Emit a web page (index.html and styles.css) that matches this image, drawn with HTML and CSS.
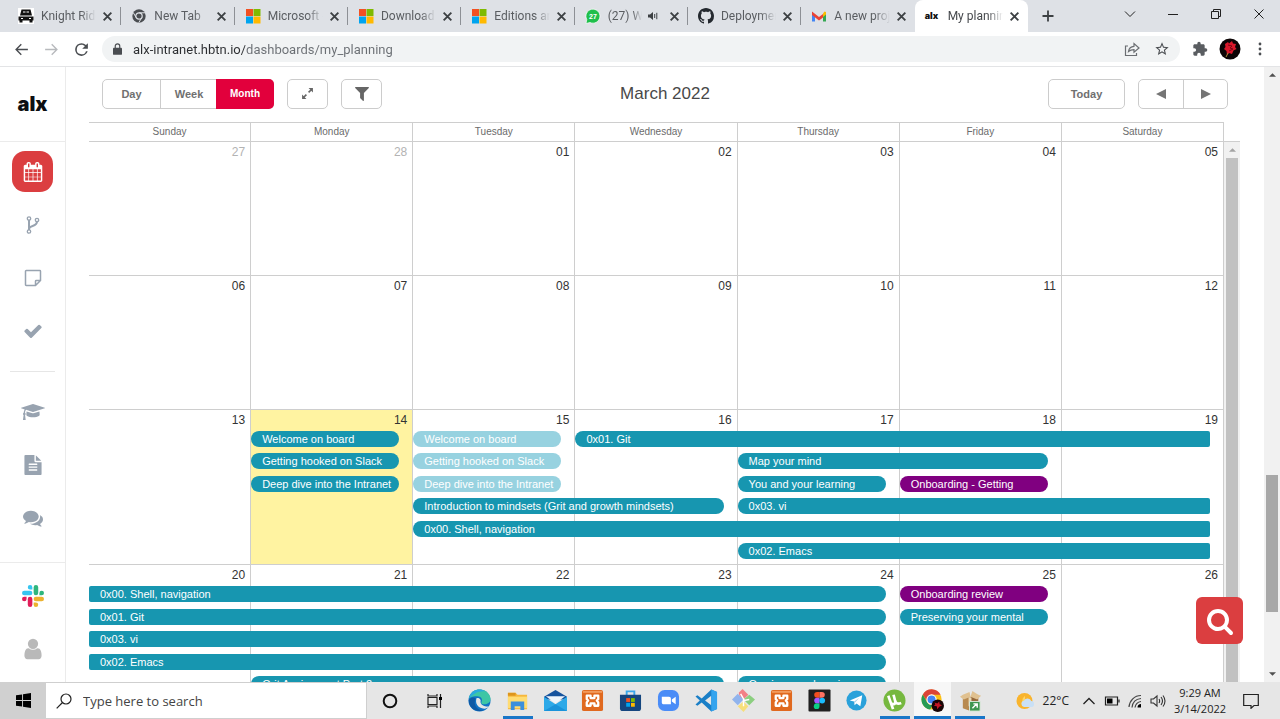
FILE: index.html
```html
<!DOCTYPE html>
<html lang="en">
<head>
<meta charset="utf-8">
<title>My planning</title>
<link rel="stylesheet" href="styles.css">
</head>
<body>
<svg class="defs" aria-hidden="true">
  <symbol id="close" viewBox="0 0 10 10"><path d="M1.500 1.500l7 7m0-7l-7 7" stroke="#3c4043" stroke-width="1.700" fill="none"/></symbol>
  <symbol id="ms" viewBox="0 0 16 16"><path fill="#f25022" d="M1 1h7v7H1z"/><path fill="#7fba00" d="M8.500 1h7v7h-7z"/><path fill="#00a4ef" d="M1 8.500h7v7H1z"/><path fill="#ffb900" d="M8.500 8.500h7v7h-7z"/></symbol>
  <symbol id="xampp" viewBox="0 0 24 24"><rect x="1" y="1" width="22" height="22" rx="2" fill="#e0691f"/><path d="M2 2h20v2H2z" fill="#f29a5c"/><path d="M6 7h4v2.500h4V7h4v3.500L16.500 12l1.500 2v3.500h-4V15h-4v2.500H6V14l1.500-2L6 10.500z" fill="none" stroke="#fff" stroke-width="2.400" stroke-linejoin="round"/></symbol>
</svg>

<header class="browser">
  <div class="tabstrip">
    <div class="tabs">
      <div class="tab"><svg class="fav" viewBox="0 0 16 16"><path fill="#fff" d="M0 0h16v16H0z"/><path d="M3.500 1.500h9l1.500 6H2zM.5 8.500h15v4H.5zM1.500 12h3v2.500h-3zM11.500 12h3v2.500h-3z" fill="#111"/><path d="M5 4h2.500M8.500 4H11M3 10.500h2M11 10.500h2" stroke="#fff"/></svg><span class="tab-title">Knight Rider</span><button class="tab-close" aria-label="Close tab"><svg><use href="#close"/></svg></button></div>
      <div class="tab"><svg class="fav" viewBox="0 0 16 16"><circle cx="8" cy="8" r="6.700" fill="#4a4d51"/><circle cx="8" cy="8" r="3.200" fill="#4a4d51" stroke="#dee1e6" stroke-width="1.200"/><path d="M8 4.800h6M5.200 9.600L2.200 4.500M10.800 9.600l-3 5" stroke="#dee1e6"/></svg><span class="tab-title">New Tab</span><button class="tab-close" aria-label="Close tab"><svg><use href="#close"/></svg></button></div>
      <div class="tab"><svg class="fav"><use href="#ms"/></svg><span class="tab-title">Microsoft - Official</span><button class="tab-close" aria-label="Close tab"><svg><use href="#close"/></svg></button></div>
      <div class="tab"><svg class="fav"><use href="#ms"/></svg><span class="tab-title">Download Windows</span><button class="tab-close" aria-label="Close tab"><svg><use href="#close"/></svg></button></div>
      <div class="tab"><svg class="fav"><use href="#ms"/></svg><span class="tab-title">Editions and</span><button class="tab-close" aria-label="Close tab"><svg><use href="#close"/></svg></button></div>
      <div class="tab"><svg class="fav" viewBox="0 0 16 16"><path d="M1 15.500l.8-4A7 7 0 1 1 5 14.500z" fill="#1fbf4b" stroke="#fff" stroke-width=".7"/><text x="8" y="10.700" text-anchor="middle" class="badge-text">27</text></svg><span class="tab-title">(27) WhatsApp</span><svg class="audio" viewBox="0 0 10 10"><path d="M0 3.500h2L5 1v8L2 6.500H0z" fill="#3c4043"/><path d="M6.700 3v4M8.800 1.800v6.400" stroke="#3c4043"/></svg><button class="tab-close" aria-label="Close tab"><svg><use href="#close"/></svg></button></div>
      <div class="tab"><svg class="fav" viewBox="0 0 16 16"><path fill="#24292f" d="M8 0C3.580 0 0 3.580 0 8c0 3.540 2.290 6.530 5.470 7.590.4.070.55-.17.55-.38 0-.19-.01-.82-.01-1.490-2.010.37-2.530-.49-2.690-.94-.09-.23-.48-.94-.82-1.130-.28-.15-.68-.52-.01-.53.63-.01 1.080.58 1.230.82.72 1.210 1.870.87 2.330.66.070-.52.28-.87.51-1.070-1.780-.2-3.640-.89-3.640-3.950 0-.87.31-1.590.82-2.150-.08-.2-.36-1.020.08-2.120 0 0 .67-.21 2.200.82.64-.18 1.320-.27 2-.27s1.360.09 2 .27c1.530-1.040 2.200-.82 2.200-.82.44 1.100.16 1.920.08 2.120.51.56.82 1.270.82 2.150 0 3.070-1.870 3.750-3.650 3.950.29.25.54.73.54 1.480 0 1.070-.01 1.930-.01 2.200 0 .21.15.46.55.38A8.010 8.010 0 0 0 16 8c0-4.420-3.580-8-8-8z"/></svg><span class="tab-title">Deployment</span><button class="tab-close" aria-label="Close tab"><svg><use href="#close"/></svg></button></div>
      <div class="tab no-line"><svg class="fav" viewBox="0 0 16 16"><path d="M1 4v9.500h3V7z" fill="#4285f4"/><path d="M15 4v9.500h-3V7z" fill="#34a853"/><path d="M1 3.500l7 5.500 4-3v3.500l-4 3-7-5.500z" fill="#ea4335"/><path d="M12 5.500l1.500-2L15 4v2.500L12 9z" fill="#fbbc04"/></svg><span class="tab-title">A new project</span><button class="tab-close" aria-label="Close tab"><svg><use href="#close"/></svg></button></div>
      <div class="tab active"><span class="fav mini-logo">alx</span><span class="tab-title">My planning</span><button class="tab-close" aria-label="Close tab"><svg><use href="#close"/></svg></button></div>
    </div>
    <button class="new-tab" aria-label="New tab"><svg viewBox="0 0 12 12"><path d="M6 .5v11M.5 6h11" stroke="#3c4043" stroke-width="1.800"/></svg></button>
    <div class="window-controls">
      <button aria-label="Search tabs"><svg viewBox="0 0 12 12"><path d="M1 3.500l5 5 5-5"/></svg></button>
      <button aria-label="Minimize"><svg viewBox="0 0 12 12"><path d="M1 6.500h10"/></svg></button>
      <button aria-label="Restore"><svg viewBox="0 0 12 12"><path d="M1.500 3.500h7v7h-7zM3.500 3.500v-2h7v7h-2"/></svg></button>
      <button aria-label="Close"><svg viewBox="0 0 12 12"><path d="M1.500 1.500l9 9m0-9l-9 9"/></svg></button>
    </div>
  </div>
  <div class="navbar">
    <button class="nav" aria-label="Back"><svg viewBox="0 0 24 24"><path fill="#4a4d51" d="M21 11H6.800l5.600-5.600L11 4l-8 8 8 8 1.400-1.400L6.800 13H21z"/></svg></button>
    <button class="nav" aria-label="Forward"><svg viewBox="0 0 24 24"><path fill="#b8babd" d="M3 11h14.200l-5.600-5.600L13 4l8 8-8 8-1.400-1.400 5.600-5.600H3z"/></svg></button>
    <button class="nav" aria-label="Reload"><svg viewBox="0 0 24 24"><path fill="#4a4d51" d="M18.300 5.700A8.900 8.900 0 0 0 12 3a9 9 0 1 0 8.700 11.300h-2.400A6.700 6.700 0 1 1 12 5.300c1.900 0 3.500.8 4.700 2L13 11h8V3z"/></svg></button>
    <div class="omnibox">
      <svg class="lock" viewBox="0 0 10 13"><path fill="#4a4d51" d="M1 5h8a1 1 0 0 1 1 1v6a1 1 0 0 1-1 1H1a1 1 0 0 1-1-1V6a1 1 0 0 1 1-1z"/><path d="M2.500 5.500V3.300a2.500 2.500 0 0 1 5 0v2.200" fill="none" stroke="#4a4d51" stroke-width="1.300"/></svg>
      <input class="url" type="text" aria-label="Address" value="alx-intranet.hbtn.io/dashboards/my_planning">
      <button aria-label="Share"><svg viewBox="0 0 16 16"><path d="M4 5H1.500v9.500h11V12M4.500 10.500c.5-3.500 2.500-5 5.500-5.200V2.500L15 7l-5 4.300V8.700c-2.500 0-4 .5-5.500 1.800z" fill="none" stroke="#6b6e72" stroke-width="1.200"/></svg></button>
      <button aria-label="Bookmark"><svg viewBox="0 0 24 24"><path fill="#4a4d51" d="M22 9.240l-7.190-.62L12 2 9.190 8.630 2 9.240l5.460 4.730L5.820 21 12 17.270 18.180 21l-1.630-7.030L22 9.240zM12 15.400l-3.760 2.270 1-4.280-3.320-2.880 4.380-.38L12 6.100l1.710 4.040 4.380.38-3.320 2.880 1 4.280L12 15.400z"/></svg></button>
    </div>
    <button class="tool" aria-label="Extensions"><svg viewBox="0 0 24 24"><path fill="#5a5d61" d="M20.500 11H19V7c0-1.100-.9-2-2-2h-4V3.500a2.500 2.500 0 0 0-5 0V5H4c-1.100 0-2 .9-2 2v3.800h1.500a2.700 2.700 0 0 1 0 5.400H2V20c0 1.100.9 2 2 2h3.800v-1.500a2.700 2.700 0 0 1 5.400 0V22H17c1.100 0 2-.9 2-2v-4h1.500a2.500 2.500 0 0 0 0-5z"/></svg></button>
    <button class="tool avatar" aria-label="Profile"><svg viewBox="0 0 22 22"><circle cx="11" cy="11" r="10.500" fill="#0c0506"/><path d="M6 6l3-2 1 1.500L13 3l1 2.500L17 6l-1 3 1.500 2-3 1.500L13 16l-3-1-2 2-.5-4L5 11l1.500-2z" fill="#d9182b"/><path d="M9 7l4 1-2 2 3 1-4 2" fill="none" stroke="#7d0614"/><path d="M7 19l2-4" stroke="#a98a3b"/></svg></button>
    <button class="tool more" aria-label="Menu"><svg viewBox="0 0 4 14"><circle cx="2" cy="2" r="1.400"/><circle cx="2" cy="7" r="1.400"/><circle cx="2" cy="12" r="1.400"/></svg></button>
  </div>
</header>

<div class="page">
  <nav class="sidebar" aria-label="Main">
    <a class="logo" href="#">alx</a>
    <div class="side-group">
      <a class="side-item current" href="#" aria-label="Planning"><svg viewBox="0 0 1792 1792"><path d="M192 1664h288v-288h-288v288zm352 0h320v-288h-320v288zm-352-352h288v-320h-288v320zm352 0h320v-320h-320v320zm-352-384h288v-288h-288v288zm736 736h320v-288h-320v288zm-384-736h320v-288h-320v288zm768 736h288v-288h-288v288zm-384-352h320v-320h-320v320zm-352-864v-288q0-13-9.500-22.500t-22.500-9.500h-64q-13 0-22.500 9.500t-9.500 22.500v288q0 13 9.500 22.500t22.500 9.500h64q13 0 22.500-9.500t9.500-22.500zm736 864h288v-320h-288v320zm-384-384h320v-288h-320v288zm384 0h288v-288h-288v288zm32-480v-288q0-13-9.500-22.500t-22.500-9.500h-64q-13 0-22.500 9.500t-9.500 22.500v288q0 13 9.500 22.500t22.500 9.500h64q13 0 22.500-9.500t9.500-22.500zm384-64v1280q0 52-38 90t-90 38h-1408q-52 0-90-38t-38-90v-1280q0-52 38-90t90-38h128v-96q0-66 47-113t113-47h64q66 0 113 47t47 113v96h384v-96q0-66 47-113t113-47h64q66 0 113 47t47 113v96h128q52 0 90 38t38 90z"/></svg></a>
      <a class="side-item" href="#" aria-label="Projects"><svg viewBox="0 0 20 20"><g fill="none" stroke="#98a3b0" stroke-width="1.300"><circle cx="6" cy="3.500" r="1.700"/><circle cx="6" cy="16.500" r="1.700"/><circle cx="14" cy="5" r="1.700"/></g><path d="M6 5v10M14 6.500c0 5.500-7.500 3.500-7.500 7" fill="none" stroke="#98a3b0" stroke-width="2"/></svg></a>
      <a class="side-item" href="#" aria-label="Evaluation"><svg viewBox="0 0 20 20"><path d="M2.500 3.200c0-.4.300-.7.700-.7h13.600c.4 0 .7.300.7.700v9.300l-5 5H3.200c-.4 0-.7-.3-.7-.7zM17.500 12.500h-4.300c-.4 0-.7.300-.7.700v4.300" fill="none" stroke="#98a3b0" stroke-width="1.500"/></svg></a>
      <a class="side-item" href="#" aria-label="Corrections"><svg viewBox="0 0 1792 1792"><path d="M1671 566q0 40-28 68l-724 724-136 136q-28 28-68 28t-68-28l-136-136-362-362q-28-28-28-68t28-68l136-136q28-28 68-28t68 28l294 295 656-657q28-28 68-28t68 28l136 136q28 28 28 68z"/></svg></a>
    </div>
    <hr class="side-divider">
    <div class="side-group">
      <a class="side-item wide" href="#" aria-label="Curriculums"><svg viewBox="0 0 2304 1792"><path d="M1774 836l18 316q4 69-82 128t-235 93.500-323 34.500-323-34.500-235-93.500-82-128l18-316 574 181q22 7 48 7t48-7zm530-324q0 23-22 31l-1120 352q-4 1-10 1t-10-1l-652-206q-43 34-71 111.500t-34 178.500q63 36 63 109 0 69-58 107l58 433q2 14-8 25-9 11-24 11h-192q-15 0-24-11-10-11-8-25l58-433q-58-38-58-107 0-73 65-111 11-207 98-330l-333-104q-22-8-22-31t22-31l1120-352q4-1 10-1t10 1l1120 352q22 8 22 31z"/></svg></a>
      <a class="side-item" href="#" aria-label="Concepts"><svg viewBox="0 0 1792 1792"><path d="M1596 476q14 14 28 36h-472v-472q22 14 36 28zm-476 164h544v1056q0 40-28 68t-68 28h-1344q-40 0-68-28t-28-68v-1600q0-40 28-68t68-28h800v544q0 40 28 68t68 28zm160 736v-64q0-14-9-23t-23-9h-704q-14 0-23 9t-9 23v64q0 14 9 23t23 9h704q14 0 23-9t9-23zm0-256v-64q0-14-9-23t-23-9h-704q-14 0-23 9t-9 23v64q0 14 9 23t23 9h704q14 0 23-9t9-23zm0-256v-64q0-14-9-23t-23-9h-704q-14 0-23 9t-9 23v64q0 14 9 23t23 9h704q14 0 23-9t9-23z"/></svg></a>
      <a class="side-item" href="#" aria-label="Conference rooms"><svg viewBox="0 0 1792 1792"><path d="M1408 768q0 139-94 257t-256.500 186.500-353.500 68.500q-86 0-176-16-124 88-278 128-36 9-86 16h-3q-11 0-20.500-8t-11.500-21q-1-3-1-6.500t.5-6.500 2-6l2.500-5 3.500-5.500 4-5 4.500-5 4-4.500q5-6 23-25t26-29.500 22.500-29 25-38.500 20.500-44q-124-72-195-177t-71-224q0-139 94-257t256.500-186.500 353.500-68.500 353.500 68.500 256.500 186.500 94 257zm384 256q0 120-71 224.500t-195 176.500q10 24 20.500 44t25 38.500 22.500 29 26 29.500 23 25q1 1 4 4.500t4.500 5 4 5 3.500 5.500l2.500 5 2 6 .5 6.500-1 6.500q-3 14-13 22t-22 7q-50-7-86-16-154-40-278-128-90 16-176 16-271 0-472-132 58 4 88 4 161 0 309-45t264-129q125-92 192-212t67-254q0-77-23-152 129 71 204 178t75 230z"/></svg></a>
    </div>
    <div class="side-group side-bottom">
      <a class="side-item slack" href="#" aria-label="Slack"><svg viewBox="0 0 24 24"><path fill="#e01e5a" d="M5 15.200a2.500 2.500 0 1 1-2.500-2.500H5zm1.300 0a2.500 2.500 0 0 1 5 0v6.300a2.500 2.500 0 0 1-5 0z"/><path fill="#36c5f0" d="M8.800 5a2.500 2.500 0 1 1 2.500-2.500V5zm0 1.300a2.500 2.500 0 0 1 0 5H2.500a2.500 2.500 0 0 1 0-5z"/><path fill="#2eb67d" d="M19 8.800a2.500 2.500 0 1 1 2.500 2.500H19zm-1.300 0a2.500 2.500 0 0 1-5 0V2.500a2.500 2.500 0 0 1 5 0z"/><path fill="#ecb22e" d="M15.200 19a2.500 2.500 0 1 1-2.500 2.500V19zm0-1.300a2.500 2.500 0 0 1 0-5h6.300a2.500 2.500 0 0 1 0 5z"/></svg></a>
      <a class="side-item wide user" href="#" aria-label="Profile"><svg viewBox="0 0 1792 1792"><path d="M1536 1399q0 109-62.500 187t-150.500 78h-854q-88 0-150.500-78t-62.500-187q0-85 8.500-160.500t31.500-152 58.500-131 94-89 134.500-34.500q131 128 313 128t313-128q76 0 134.500 34.500t94 89 58.500 131 31.500 152 8.500 160.500zm-256-887q0 159-112.500 271.500t-271.500 112.500-271.500-112.500-112.500-271.500 112.500-271.500 271.500-112.500 271.500 112.500 112.500 271.500z"/></svg></a>
    </div>
  </nav>

  <main class="content">
    <div class="cal-toolbar">
      <div class="tools-left">
        <div class="segmented"><button>Day</button><button>Week</button><button class="on">Month</button></div>
        <button class="icon-btn" aria-label="Full screen"><svg viewBox="0 0 12 12"><path d="M7 1h4v4zM5 11H1V7z"/><path d="M9.500 2.500L7 5M5 7L2.500 9.500" stroke="#666" stroke-width="1.500"/></svg></button>
        <button class="icon-btn big" aria-label="Filter"><svg viewBox="192 256 1408 1408"><path d="M1595 295q17 41-14 70l-493 493v742q0 42-39 59-13 5-25 5-27 0-45-19l-256-256q-19-19-19-45v-486l-493-493q-31-29-14-70 17-39 59-39h1280q42 0 59 39z"/></svg></button>
      </div>
      <h1>March 2022</h1>
      <div class="tools-right">
        <button class="today">Today</button>
        <div class="segmented pager"><button aria-label="Previous"><svg viewBox="0 0 10 12"><path d="M10 1v10L0 6z"/></svg></button><button aria-label="Next"><svg viewBox="0 0 10 12"><path d="M0 1v10l10-5z"/></svg></button></div>
      </div>
    </div>
    <div class="cal-head">
      <div class="seven names"><span>Sunday</span><span>Monday</span><span>Tuesday</span><span>Wednesday</span><span>Thursday</span><span>Friday</span><span>Saturday</span></div>
    </div>
    <div class="cal-body">
      <div class="weeks">
        <section class="week">
          <div class="seven days"><span class="other">27</span><span class="other">28</span><span>01</span><span>02</span><span>03</span><span>04</span><span>05</span></div>
        </section>
        <section class="week">
          <div class="seven days"><span>06</span><span>07</span><span>08</span><span>09</span><span>10</span><span>11</span><span>12</span></div>
        </section>
        <section class="week week-busy">
          <div class="seven days"><span>13</span><span class="now">14</span><span>15</span><span>16</span><span>17</span><span>18</span><span>19</span></div>
          <div class="seven events">
            <a href="#" class="ev r1 c2 s1">Welcome on board</a>
            <a href="#" class="ev r1 c3 s1 faded">Welcome on board</a>
            <a href="#" class="ev r1 c4 s4 goes-on">0x01. Git</a>
            <a href="#" class="ev r2 c2 s1">Getting hooked on Slack</a>
            <a href="#" class="ev r2 c3 s1 faded">Getting hooked on Slack</a>
            <a href="#" class="ev r2 c5 s2">Map your mind</a>
            <a href="#" class="ev r3 c2 s1">Deep dive into the Intranet</a>
            <a href="#" class="ev r3 c3 s1 faded">Deep dive into the Intranet</a>
            <a href="#" class="ev r3 c5 s1">You and your learning</a>
            <a href="#" class="ev r3 c6 s1 purple">Onboarding - Getting</a>
            <a href="#" class="ev r4 c3 s2">Introduction to mindsets (Grit and growth mindsets)</a>
            <a href="#" class="ev r4 c5 s3 goes-on">0x03. vi</a>
            <a href="#" class="ev r5 c3 s5 goes-on">0x00. Shell, navigation</a>
            <a href="#" class="ev r6 c5 s3 goes-on">0x02. Emacs</a>
          </div>
        </section>
        <section class="week week-last">
          <div class="seven days"><span>20</span><span>21</span><span>22</span><span>23</span><span>24</span><span>25</span><span>26</span></div>
          <div class="seven events">
            <a href="#" class="ev r1 c1 s5 came">0x00. Shell, navigation</a>
            <a href="#" class="ev r1 c6 s1 purple">Onboarding review</a>
            <a href="#" class="ev r2 c1 s5 came">0x01. Git</a>
            <a href="#" class="ev r2 c6 s1">Preserving your mental</a>
            <a href="#" class="ev r3 c1 s5 came">0x03. vi</a>
            <a href="#" class="ev r4 c1 s5 came">0x02. Emacs</a>
            <a href="#" class="ev r5 c2 s3">Grit Assignment Part 2</a>
            <a href="#" class="ev r5 c5 s1">Owning your learning</a>
          </div>
        </section>
      </div>
      <div class="scroll inner"><svg viewBox="0 0 8 4"><path d="M0 4l4-4 4 4z"/></svg><i class="thumb"></i></div>
    </div>
    <button class="search-fab" aria-label="Search"><svg viewBox="0 0 1792 1792"><path d="M1216 832q0-185-131.500-316.500t-316.500-131.500-316.500 131.500-131.500 316.500 131.500 316.500 316.500 131.500 316.500-131.500 131.500-316.500zm512 832q0 52-38 90t-90 38q-54 0-90-38l-343-342q-179 124-399 124-143 0-273.500-55.500t-225-150-150-225-55.500-273.500 55.500-273.500 150-225 225-150 273.500-55.500 273.500 55.500 225 150 150 225 55.500 273.500q0 220-124 399l343 343q37 37 37 90z"/></svg></button>
  </main>
  <div class="scroll outer"><svg viewBox="0 0 8 4"><path d="M0 4l4-4 4 4z"/></svg><i class="before"></i><i class="thumb"></i><i class="after"></i><svg viewBox="0 0 8 4"><path d="M0 0l4 4 4-4z"/></svg></div>
</div>

<footer class="taskbar">
  <button class="start" aria-label="Start"><svg viewBox="0 0 16 16"><path d="M0 2.500l6.500-1v6H0zM7.500 1.300L16 0v7.500H7.500zM0 8.500h6.500v6L0 13.600zM7.500 8.500H16V16l-8.500-1.300z"/></svg></button>
  <label class="task-search"><svg viewBox="0 0 16 16"><circle cx="10" cy="6" r="5" fill="none" stroke="#222" stroke-width="1.200"/><path d="M6.500 9.500L.7 15.300" stroke="#222" stroke-width="1.200"/></svg><input type="text" aria-label="Search" placeholder="Type here to search"></label>
  <div class="sys">
    <button aria-label="Cortana"><svg viewBox="0 0 16 16"><circle cx="8" cy="8" r="6.300" fill="none" stroke="#111" stroke-width="2"/></svg></button>
    <button aria-label="Task view"><svg viewBox="0 0 16 16"><path d="M1 1v2h9V1M1 15v-2h9v2M1 4.500h9v7H1zM13.500 1v14" fill="none" stroke="#222" stroke-width="1.200"/><path d="M12 4h3v3h-3z"/></svg></button>
  </div>
  <div class="apps">
    <button aria-label="Edge"><svg viewBox="0 0 24 24"><circle cx="12" cy="12" r="11.500" fill="#1173c5"/><path d="M1 10C2 3 8 .5 12 .5c7 0 11.500 5 11.500 10 0 4-3.500 5.500-6.500 5.500-2.500 0-3.500-1-3-2.500 2-3-1-6-4-6C6 7.500 2.500 8 1 10z" fill="#3dc6a5"/><path d="M1 10C2 3 8 .5 12 .5c2 0 4 .5 6 2C10 2 6 5 1 10z" fill="#2aa9df"/><path d="M9 9.500c-2 5 1 11 8 11 2 0 4-1 5-2.500-2 .5-8 .5-9-4.500 1-2-1-4.500-4-4z" fill="#e6e6e6"/><path d="M8 10c-3 6 1 12 8 12.500-8 2.500-16-4-15-11 1.500-3 5-3.500 7-1.500z" fill="#0f59a4"/></svg></button>
    <button class="open" aria-label="File Explorer"><svg viewBox="0 0 24 24"><path d="M2 4h8l2 2h10v15H2z" fill="#f6b73c"/><path d="M2 8h20v12H2z" fill="#ffdc72"/><path d="M2 4h8v3H2z" fill="#dd951d"/><path d="M5 13h14v9h-4v-4H9v4H5z" fill="#3b8fdc"/></svg></button>
    <button aria-label="Mail"><svg viewBox="0 0 24 24"><path d="M0 8l12-7 12 7v3H0z" fill="#15539e"/><path d="M2 7.500h20L12 15z" fill="#eef5fb"/><path d="M0 8l12 8 12-8v15H0z" fill="#2da9e8"/><path d="M0 23l12-7 12 7z" fill="#1a93da"/></svg></button>
    <button aria-label="XAMPP"><svg><use href="#xampp"/></svg></button>
    <button aria-label="Store"><svg viewBox="0 0 24 24"><path d="M8 7V2.500h8V7" fill="none" stroke="#3aa7ea" stroke-width="2"/><path d="M1 6h22v14a3 3 0 0 1-3 3H4a3 3 0 0 1-3-3z" fill="#15467f"/><path fill="#f25022" d="M7.500 9.500h4v4h-4z"/><path fill="#7fba00" d="M12.500 9.500h4v4h-4z"/><path fill="#00a4ef" d="M7.500 14.500h4v4h-4z"/><path fill="#ffb900" d="M12.500 14.500h4v4h-4z"/></svg></button>
    <button aria-label="Zoom"><svg viewBox="0 0 24 24"><rect x="1" y="1" width="22" height="22" rx="7" fill="#4a8cf7"/><path d="M5 8h7.500c1.400 0 2 .8 2 2v6H7.500c-1.500 0-2.500-.8-2.500-2zM15.500 11l4-3v8l-4-3z" fill="#fff"/></svg></button>
    <button aria-label="Visual Studio Code"><svg viewBox="0 0 24 24"><path d="M17 .5l6 2.700v17.600l-6 2.700L7 14l-4.500 3.500L.5 16.300 5 12 .5 7.700l2-1.200L7 10zM17 7l-6.500 5 6.500 5z" fill="#1a7fc7" fill-rule="evenodd"/><path d="M17 .5l6 2.700v17.600l-6 2.700z" fill="#35a4ee"/></svg></button>
    <button aria-label="Git"><svg viewBox="0 0 24 24"><path d="M11 0l6 6-6 6-3-4-1-4z" fill="#f28086"/><path d="M6 5l6 6-6 6-6-6z" fill="#91b4ed"/><path d="M18 6l6 5-6 6-6-6z" fill="#8ccf80"/><path d="M12 13l5 5-5 6-6-6z" fill="#f7df7a"/><path d="M9 5l4 7 5-1M12 10v8" fill="none" stroke="#fff" stroke-width="1.500"/></svg></button>
    <button aria-label="XAMPP Control"><svg><use href="#xampp"/></svg></button>
    <button aria-label="Figma"><svg viewBox="0 0 24 24"><rect x=".5" y=".5" width="23" height="23" rx="1" fill="#202020"/><path d="M12 3v6H9.500a3 3 0 0 1 0-6z" fill="#f24e1e"/><path d="M12 3h2.500a3 3 0 0 1 0 6H12z" fill="#ff7262"/><path d="M12 9v6H9.500a3 3 0 0 1 0-6z" fill="#a259ff"/><circle cx="14.800" cy="12" r="3" fill="#1abcfe"/><path d="M12 15v3a3 3 0 1 1-2.500-3z" fill="#0acf83"/></svg></button>
    <button aria-label="Telegram"><svg viewBox="0 0 24 24"><circle cx="12" cy="12" r="10.500" fill="#2aa1da"/><path d="M5 12l13-5.500L16 18l-4-3-2 2-.5-4z" fill="#fff"/><path d="M9.500 13L15 9l-4.500 5-.5 3z" fill="#a9cfe6"/></svg></button>
    <button class="open" aria-label="uTorrent"><svg viewBox="0 0 24 24"><circle cx="12" cy="12" r="11.500" fill="#76b83f"/><path d="M5.500 7l2.500 7c.8 2.800 5.500 2.300 4.800-1L11 6M12.800 12.500c.7 3 3.200 3.300 6.200 2M8 14l2.500 7" fill="none" stroke="#fff" stroke-width="2.800"/></svg></button>
    <button class="open focus" aria-label="Chrome"><svg viewBox="0 0 24 24"><circle cx="11" cy="11" r="10.500" fill="#fbc116"/><path d="M1.900 5.700A10.500 10.500 0 0 1 20.500 6H11a5 5 0 0 0-4.500 7z" fill="#db4437"/><path d="M1.900 5.700L6.500 14a5 5 0 0 0 6 2l-3 5.400A10.500 10.500 0 0 1 1.900 5.700z" fill="#269b55"/><circle cx="11" cy="11" r="4.800" fill="#4285f4" stroke="#fff" stroke-width="1.200"/><circle cx="17.500" cy="17.500" r="6.500" fill="#190506"/><path d="M14 14l3 1 2-2 .5 3 2.500 1-3 1.500L17 21l-.5-3-3-.5 1.500-1.500z" fill="#c51625"/></svg></button>
    <button class="open" aria-label="Archive"><svg viewBox="0 0 24 24"><path d="M4 7l8 2 8-2v13l-8 3-8-3z" fill="#b88a50"/><path d="M12 8l8-2v14l-8 3z" fill="#96683a"/><path d="M4 6l7-3 1 5-7 3-4-3zM20 6l-6-4-2 6 7 3 4-4z" fill="#e0c190"/><path d="M10 9h3v9h-3z" fill="#eadab6"/><path d="M11 13h11v10H11z" fill="#3f9650" stroke="#dceadc"/><path d="M14 20l4.500-4.500M15 15.500h4v4" fill="none" stroke="#fff" stroke-width="1.500"/></svg></button>
  </div>
  <div class="tray">
    <button class="weather"><svg viewBox="0 0 18 18"><circle cx="8.500" cy="9" r="8" fill="#f9b42d"/><path d="M9 4a6 6 0 0 0 0 10" fill="#ffd667"/><path d="M8 15a3.200 3.200 0 0 1 0-6.300 4 4 0 0 1 7.300.3A3 3 0 0 1 15 15z" fill="#c9e0f6"/></svg>22°C</button>
    <button aria-label="Show hidden icons"><svg viewBox="0 0 16 16"><path d="M2.500 11L8 5.500l5.500 5.500" fill="none" stroke="#222" stroke-width="1.300"/></svg></button>
    <button aria-label="Battery"><svg viewBox="0 0 16 16"><path d="M1.500 4h12v8h-12zM15 6.500v3" fill="none" stroke="#222" stroke-width="1.200"/><path d="M3 5.500h5.500v5H3z"/></svg></button>
    <button aria-label="Network"><svg viewBox="0 0 16 16"><g fill="none" stroke="#444" stroke-width="1.200"><path d="M2 14C2.500 7.500 7.500 2.500 14 2.500M5 14.500c.5-5 4-8.500 9-9M8 14.500c.5-3 2.500-5.500 6-6"/></g><path d="M10.500 14.500a3.500 3.500 0 0 1 3.500-3.500v3.500z"/></svg></button>
    <button aria-label="Volume"><svg viewBox="0 0 16 16"><path d="M1 6h2.500L7 3v10L3.500 10H1zM9 6q1.300 2 0 4M11 4q3 4 0 8M13 2.500q4 5.500 0 11" fill="none" stroke="#333" stroke-width="1.100"/></svg></button>
    <div class="clock"><time>9:29 AM</time><time>3/14/2022</time></div>
    <button class="notes" aria-label="Notifications"><svg viewBox="0 0 16 16"><path d="M.7 1.500h14.600v11H11L8 15.300V12.500H.7z" fill="none" stroke="#222" stroke-width="1.200"/></svg></button>
  </div>
</footer>
</body>
</html>
```
FILE: styles.css
```css
* { box-sizing: border-box; }

body {
  margin: 0;
  height: 100vh;
  display: flex;
  flex-direction: column;
  overflow: hidden;
  background: #fff;
  font-family: "Liberation Sans", Arial, sans-serif;
  color: #333;
}

button {
  display: flex;
  align-items: center;
  justify-content: center;
  margin: 0;
  padding: 0;
  border: 0;
  background: none;
  font: inherit;
  color: inherit;
}

input { border: 0; padding: 0; background: none; outline: 0; min-width: 0; }
svg { display: block; flex: none; }
.defs { display: none; }

/* Browser chrome */
.browser { flex: none; font-family: Roboto, "Open Sans", sans-serif; }
.tabstrip { display: flex; height: 32px; padding-left: 8px; background: #dee1e6; }
.tabs { display: flex; flex: 0 1 1020px; min-width: 0; }
.tab {
  position: relative;
  display: flex;
  align-items: center;
  flex: 1 1 0;
  min-width: 0;
  padding: 0 8px 0 10px;
  font-size: 12px;
  color: #5a5d61;
}
.tab::after {
  content: "";
  position: absolute;
  right: 0;
  top: 7px;
  height: 18px;
  border-right: 1px solid #8d9095;
}
.tab.no-line::after, .tab.active::after { display: none; }
.tab.active { background: #fff; border-radius: 8px 8px 0 0; color: #45484c; }
.fav { width: 16px; height: 16px; flex: none; }
.badge-text { font: bold 7px "Liberation Sans", sans-serif; fill: #fff; }
.mini-logo { font: 900 9px/16px Inter, sans-serif; color: #111; }
.tab-title {
  flex: 1;
  min-width: 0;
  margin: 0 6px 0 7px;
  overflow: hidden;
  white-space: nowrap;
  mask-image: linear-gradient(to right, #000 72%, transparent);
}
.audio { width: 10px; height: 10px; margin-right: 11px; }
.tab-close, .tab-close svg { width: 11px; height: 11px; }
.new-tab { width: 40px; }
.new-tab svg { width: 12px; height: 12px; }
.window-controls { display: flex; margin-left: auto; height: 27px; }
.window-controls button { width: 43px; }
.window-controls svg { width: 12px; height: 12px; fill: none; stroke: #222; }

.navbar {
  display: flex;
  align-items: center;
  height: 35px;
  padding: 0 5px 0 6px;
  background: #fff;
  border-bottom: 1px solid #e3e4e6;
}
.nav { width: 30px; }
.nav svg { width: 17px; height: 17px; }
.omnibox {
  display: flex;
  align-items: center;
  flex: 1;
  height: 26px;
  margin: 0 5px 0 6px;
  padding: 0 3px 0 11px;
  border-radius: 13px;
  background: #f1f3f4;
}
.lock { width: 9px; height: 12px; }
.url {
  flex: 1;
  margin-left: 11px;
  font: 13px Roboto, "Open Sans", sans-serif;
  color: transparent;
  background: linear-gradient(to right, #2b2d30 112px, #6a6e73 112px);
  background-clip: text;
  -webkit-background-clip: text;
}
.omnibox button { width: 30px; }
.omnibox button svg { width: 16px; height: 16px; }
.tool { width: 30px; }
.tool svg { width: 16px; height: 16px; }
.tool.avatar svg { width: 22px; height: 22px; }
.tool.more svg { width: 4px; height: 14px; fill: #4a4d51; }

/* Page */
.page { display: flex; flex: 1; min-height: 0; }

.sidebar { width: 66px; flex: none; border-right: 1px solid #ebebeb; overflow: hidden; }
.logo {
  display: flex;
  align-items: center;
  justify-content: center;
  height: 75px;
  border-bottom: 1px solid #ebebeb;
  font: 900 20px Inter, sans-serif;
  color: #0d0f12;
  text-decoration: none;
}
.side-group { display: flex; flex-direction: column; align-items: center; gap: 12px; }
.logo + .side-group { padding-top: 9px; }
.side-item {
  display: flex;
  align-items: center;
  justify-content: center;
  width: 41px;
  height: 41px;
  border-radius: 13px;
}
.side-item svg { width: 20px; height: 20px; fill: #98a3b0; }
.side-item.wide svg { width: 24px; height: 24px; }
.side-item.slack svg { width: 22px; height: 22px; }
.side-item.user svg { fill: #b9b9b9; }
.side-item.current { background: #db3e40; }
.side-item.current svg { fill: #fff; }
.side-divider { margin: 20px 10px 19px; border: 0; border-top: 1px solid #e6e6e6; }
.side-bottom { margin-top: 24px; padding-top: 12px; border-top: 1px solid #ebebeb; }

.content {
  position: relative;
  display: flex;
  flex-direction: column;
  flex: 1;
  min-width: 0;
  padding: 0 24px 0 23px;
}
.cal-toolbar {
  display: grid;
  grid-template-columns: 1fr auto 1fr;
  align-items: center;
  height: 55px;
  padding: 0 12px 2px 13px;
  font-size: 11px;
  font-weight: bold;
  color: #707070;
}
.cal-toolbar h1 { margin: 0; font-size: 17px; font-weight: normal; color: #484848; }
.tools-left, .tools-right { display: flex; gap: 13px; }
.tools-right { justify-content: flex-end; }
.segmented, .icon-btn, .today {
  height: 30px;
  border: 1px solid #ccc;
  border-radius: 5px;
}
.segmented { display: flex; }
.segmented button { width: 57px; }
.segmented button + button { border-left: 1px solid #ccc; }
.segmented .on {
  margin: -1px;
  width: 58px;
  border-radius: 0 5px 5px 0;
  background: #e2003c;
  color: #fff;
  font-size: 10px;
}
.segmented button.on { border-left: 0; }
.icon-btn { width: 41px; }
.icon-btn svg { width: 13px; height: 13px; fill: #666; }
.icon-btn.big svg { width: 14px; height: 14px; }
.today { width: 77px; }
.pager button { width: 44px; }
.pager svg { width: 10px; height: 12px; fill: #757575; }

.seven { display: grid; grid-template-columns: repeat(7, minmax(0, 1fr)); }
.cal-head {
  height: 20px;
  padding-right: 16px;
  border-bottom: 1px solid #cecece;
}
.names { height: 19px; border-top: 1px solid #cecece; }
.names span {
  border-right: 1px solid #cecece;
  font-size: 10px;
  line-height: 18px;
  text-align: center;
  color: #6b6b6b;
}
.cal-body { display: flex; flex: 1; min-height: 0; overflow: hidden; }
.weeks { flex: 1; min-width: 0; }
.week { display: grid; min-height: 134px; border-bottom: 1px solid #cecece; }
.week > * { grid-area: 1 / 1; }
.days span {
  padding: 3px 5px 0 0;
  border-right: 1px solid #cecece;
  font-size: 12px;
  line-height: 14px;
  text-align: right;
}
.days .other { color: #b3b3b3; }
.days .now { background: #fff3a1; }
.events { align-content: space-between; grid-auto-rows: 16px; align-self: start; margin-top: 21px; }
.week-busy { min-height: 155px; }
.week-busy .events { height: 128px; }
.week-last .events { height: 106px; }
.ev {
  margin-right: 14px;
  padding-left: 11px;
  border-radius: 8px;
  background: #1796b0;
  color: #fff;
  font-size: 11px;
  line-height: 16px;
  white-space: nowrap;
  overflow: hidden;
  text-decoration: none;
}
.ev.faded { background: #97d2e0; }
.ev.purple { background: #800080; }
.ev.goes-on { border-radius: 8px 2px 2px 8px; }
.ev.came { border-radius: 2px 8px 8px 2px; }
.r1 { grid-row: 1; } .r2 { grid-row: 2; } .r3 { grid-row: 3; }
.r4 { grid-row: 4; } .r5 { grid-row: 5; } .r6 { grid-row: 6; }
.c1 { grid-column-start: 1; } .c2 { grid-column-start: 2; } .c3 { grid-column-start: 3; }
.c4 { grid-column-start: 4; } .c5 { grid-column-start: 5; } .c6 { grid-column-start: 6; }
.s1 { grid-column-end: span 1; } .s2 { grid-column-end: span 2; } .s3 { grid-column-end: span 3; }
.s4 { grid-column-end: span 4; } .s5 { grid-column-end: span 5; }

.scroll { display: flex; flex-direction: column; align-items: center; flex: none; background: #f1f1f1; }
.scroll svg { width: 7px; height: 4px; margin: 6px 0; fill: #505050; }
.scroll .thumb { width: 12px; }
.inner { width: 16px; }
.inner svg { fill: #a3a3a3; }
.inner .thumb { flex: 1; background: #c1c1c1; }
.outer { width: 16px; }
.outer .before { flex: 391; }
.outer .thumb { flex: 137; background: #a8a8a8; }
.outer .after { flex: 54; }

.search-fab {
  position: absolute;
  right: 21px;
  bottom: 38px;
  width: 47px;
  height: 47px;
  border-radius: 6px;
  background: #db3e40;
}
.search-fab svg { width: 28px; height: 28px; fill: #fff; }

/* Taskbar */
.taskbar {
  display: flex;
  flex: none;
  height: 37px;
  background: #e6e6e6;
  font-family: "Open Sans", "Noto Sans", sans-serif;
  color: #222;
}
.start { width: 46px; background: #d0d0d0; }
.start svg { width: 15px; height: 15px; }
.task-search {
  display: flex;
  align-items: center;
  gap: 11px;
  flex: 0 1 321px;
  padding-left: 10px;
  background: #fff;
  border: 1px solid #cfcfcf;
  border-left: 0;
}
.task-search svg { width: 16px; height: 16px; }
.task-search input { flex: 1; font: 13px "Open Sans", "Noto Sans", sans-serif; }
.task-search input::placeholder { color: #444; opacity: 1; }
.sys { display: flex; }
.sys button { width: 45px; }
.sys svg { width: 16px; height: 16px; }
.apps { display: grid; grid-template-columns: repeat(14, 1fr); flex: 0 1 528px; margin-left: 4px; }
.apps button { border-bottom: 3px solid transparent; border-top: 3px solid transparent; }
.apps svg { width: 23px; height: 23px; }
.apps .open {
  background: linear-gradient(#1976c8, #1976c8) center bottom / 30px 3px no-repeat border-box;
}
.apps .focus {
  background: linear-gradient(#1976c8, #1976c8) center bottom / 100% 3px no-repeat border-box, #f7f7f7;
}
.tray { display: flex; align-items: center; margin-left: auto; padding-right: 9px; }
.tray button { width: 23px; height: 100%; }
.tray svg { width: 16px; height: 16px; }
.tray .weather { width: auto; gap: 9px; margin-right: 8px; font-size: 12px; }
.tray .weather svg { width: 18px; height: 18px; }
.clock { display: flex; flex-direction: column; align-items: center; width: 62px; font-size: 11px; line-height: 16px; }
.clock time { white-space: nowrap; }
.tray .notes { width: 40px; }
```
